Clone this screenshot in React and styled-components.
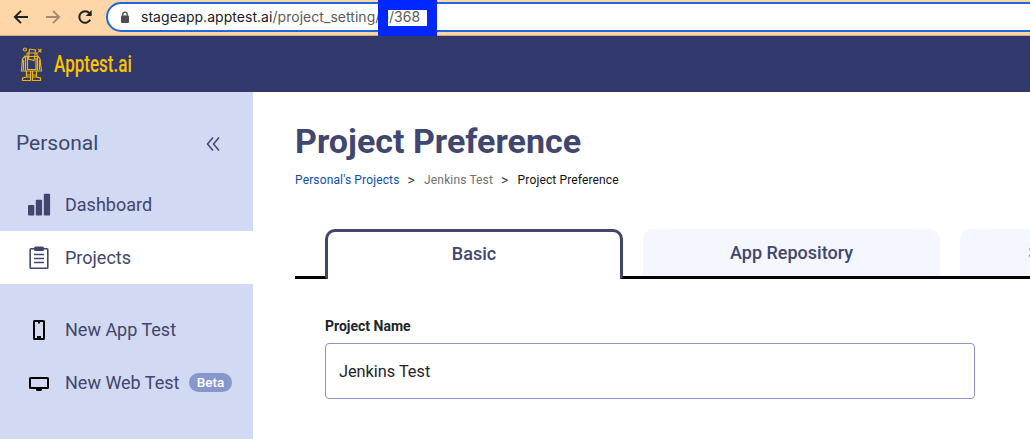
import React from "react";
import styled, { createGlobalStyle } from "styled-components";

const Global = createGlobalStyle`
  * { box-sizing: border-box; }
  body { margin: 0; overflow: hidden; background: #fff; font-family: Roboto, "Liberation Sans", sans-serif; }
`;
const Page = styled.div`
  width: 1030px; height: 439px; overflow: hidden;
  display: flex; flex-direction: column;
`;
const BrowserBar = styled.div`
  position: relative; flex: none; height: 36px; background: #ffd6a8;
  border-bottom: 1px solid #cfae8b; display: flex; align-items: flex-start;
`;
const BrowserIcons = styled.div`
  width: 106px; flex: none; height: 34px; padding-left: 13px;
  display: flex; align-items: center; gap: 16px;
`;
const AddressBar = styled.div`
  flex: none; width: 960px; height: 30px; margin-top: 2px; padding-left: 12px;
  border: 2px solid #1b68e0; border-radius: 15px; background: #fff;
  display: flex; align-items: center; gap: 11px;
`;
const Url = styled.span`
  font: 400 14px/20px Inter, Roboto, sans-serif; color: #202124; white-space: nowrap;
  letter-spacing: 0.04px;
`;
const UrlPath = styled.span`color: #5c5b58;`;
const Marker = styled.div`
  position: absolute; left: 378px; top: 0; width: 59px; height: 36px; border: 10px solid #0027ff;
`;
const NavBar = styled.header`
  flex: none; height: 56px; background: #31386b; padding-left: 20px;
  display: flex; align-items: center; gap: 11px;
`;
const Brand = styled.span`
  margin-top: 2px; font: 500 23px/28px Roboto, sans-serif; color: #fdc300; white-space: nowrap;
  transform: scaleX(0.74); transform-origin: left center;
`;
const Body = styled.div`flex: 1; min-height: 0; display: flex;`;
const Sidebar = styled.aside`
  flex: none; width: 253px; background: #d2d9f3; color: #40466e;
`;
const SideHead = styled.div`
  height: 86px; padding: 15px 33px 0 16px; display: flex; align-items: center;
  justify-content: space-between; font-size: 21px;
`;
const SideItem = styled.div`
  height: 53px; padding-left: 27px; display: flex; align-items: center;
  font-size: 18px; white-space: nowrap;
  background: ${(p) => (p.$active ? "#fff" : "transparent")};
  margin-top: ${(p) => (p.$group ? "19px" : "0")};
`;
const ItemIcon = styled.span`width: 38px; flex: none; display: flex;`;
const Beta = styled.span`
  margin-left: 9.5px; width: 43px; height: 19px; border-radius: 10px; background: #8796cd;
  color: #fff; font: 500 13.5px/19px Roboto, sans-serif; text-align: center;
`;
const Main = styled.main`flex: 1; min-width: 0; padding: 27px 0 0 42px; overflow: hidden;`;
const Title = styled.h1`margin: 0; font: 700 34px/44px Roboto, sans-serif; color: #40466e; white-space: nowrap;`;
const Crumbs = styled.nav`
  height: 18px; margin-top: 8px; display: flex; align-items: center; gap: 8px;
  font-size: 12px; letter-spacing: 0.14px; white-space: nowrap;
`;
const Crumb = styled.span`color: ${(p) => p.$color};`;
const Separator = styled.span`width: 8.6px; font-size: 14px; color: #444;`;
const Tabs = styled.div`
  margin-top: 40px; height: 50px; width: 1000px; display: flex; gap: 20px; padding-left: 30px;
  background: linear-gradient(#000, #000) left bottom / 100% 3px no-repeat;
`;
const Tab = styled.div`
  flex: none; width: ${(p) => (p.$active ? "298px" : "297px")};
  height: ${(p) => (p.$active ? "50px" : "47px")};
  border: ${(p) => (p.$active ? "3px solid #40466e" : "0")}; border-bottom: 0;
  border-radius: 10px 10px ${(p) => (p.$active ? "3px 3px" : "0 0")};
  background: ${(p) => (p.$active ? "#fff" : "#f4f7ff")};
  text-align: center; color: #40466e;
  font: 500 18px/${(p) => (p.$active ? "43px" : "47px")} Roboto, sans-serif;
`;
const ClippedTab = styled(Tab)`text-align: left; padding-left: 68.5px;`;
const Form = styled.section`padding: 38px 0 0 30px;`;
const Label = styled.label`display: block; font: 700 14px/18px Roboto, sans-serif; color: #212529;`;
const Field = styled.div`
  margin-top: 8px; width: 650px; height: 56px; padding-left: 13px; border: 1px solid #8796cd;
  border-radius: 4px; display: flex; align-items: center; font-size: 16.3px; color: #212529;
`;

const ArrowIcon = ({ flip, color }) => (
  <svg width="16" height="16" viewBox="0 0 16 16" fill="none" stroke={color} strokeWidth="1.9">
    <path d={flip ? "M1 8H14M8 1.8L14.2 8L8 14.2" : "M15 8H2M8 1.8L1.8 8L8 14.2"} />
  </svg>
);
const ReloadIcon = () => (
  <svg width="16" height="16" viewBox="0 0 16 16">
    <path d="M13.2 10.8A5.8 5.8 0 1 1 12.5 4.2" fill="none" stroke="#202124" strokeWidth="2" />
    <path d="M14.7 1V7H8.7Z" fill="#202124" />
  </svg>
);
const LockIcon = () => (
  <svg width="10" height="13" viewBox="0 0 10 13">
    <rect x="1" y="4.5" width="8" height="7.5" rx="1" fill="#4b4d51" />
    <path d="M2.8 5V3.3a2.2 2.2 0 0 1 4.4 0V5" fill="none" stroke="#4b4d51" strokeWidth="1.3" />
  </svg>
);
const RobotIcon = () => (
  <svg width="23" height="36" viewBox="0 0 23 36" fill="none" stroke="#e8b512" strokeWidth="1.2">
    <circle cx="5" cy="3.5" r="1.5" />
    <path d="M18.2 3L21.5 6.3M21.5 3L18.2 6.3" />
    <path d="M9.5 3L15.5 4L15 8.5M9.5 3L9 7M7 7H17V11M7 7V11M9 7L8.5 13L14 14.5L15 8.5" />
    <path d="M5.5 9.5L2.5 13L1.5 25H5.5M17.5 9.5L20 13L21.5 25H18" />
    <path d="M5.5 10.5H17.5V25H5.5ZM7.5 11V23.5H16V12M3.5 14V24M19.5 14V24" />
    <path d="M6.5 25V31L2.5 32V34.5H10.5V25M12.5 25V34.5H20.5V32L16.5 31V25M6.5 29H10.5M12.5 29H16.5M6.5 31H10.5M12.5 31H16.5" />
  </svg>
);
const CollapseIcon = () => (
  <svg width="15" height="16" viewBox="0 0 15 16" fill="none" stroke="#40466e" strokeWidth="1.5">
    <path d="M8 2.5L2.5 9L8 15.5M14 2.5L8.5 9L14 15.5" />
  </svg>
);
const BarsIcon = () => (
  <svg width="24" height="24" viewBox="0 0 24 24" fill="#40466e">
    <rect x="1" y="12" width="6.3" height="10.5" rx="1" />
    <rect x="8.8" y="6.8" width="6.3" height="15.7" rx="1" />
    <rect x="16.8" y="0.8" width="6.3" height="21.7" rx="1" />
  </svg>
);
const ClipboardIcon = () => (
  <svg width="24" height="24" viewBox="0 0 24 24">
    <rect x="3.2" y="2.8" width="17.6" height="19.4" rx="0.8" fill="none" stroke="#40466e" strokeWidth="1.6" />
    <rect x="7" y="0.5" width="10" height="4.5" rx="1.5" fill="#40466e" />
    <path d="M7 8.5H17M7 12.5H17M7 16.5H17" stroke="#40466e" strokeWidth="1.7" />
  </svg>
);
const PhoneIcon = () => (
  <svg width="24" height="24" viewBox="0 0 24 24">
    <rect x="7" y="3" width="10" height="18" rx="0.5" fill="none" stroke="#000" strokeWidth="2" />
    <path d="M10 18H14V20H10ZM11 4H13V5.5H11Z" />
  </svg>
);
const ScreenIcon = () => (
  <svg width="24" height="24" viewBox="0 0 24 24">
    <rect x="3" y="7" width="18" height="10" rx="0.5" fill="none" stroke="#000" strokeWidth="2" />
    <path d="M9 18H15V19.5H14V20H10V19.5H9Z" />
  </svg>
);

export default function App() {
  return (
    <Page>
      <Global />
      <BrowserBar>
        <BrowserIcons>
          <ArrowIcon color="#202124" />
          <ArrowIcon flip color="#a38b70" />
          <ReloadIcon />
        </BrowserIcons>
        <AddressBar>
          <LockIcon />
          <Url>stageapp.apptest.ai<UrlPath>/project_setting/p/368</UrlPath></Url>
        </AddressBar>
        <Marker />
      </BrowserBar>
      <NavBar>
        <RobotIcon />
        <Brand>Apptest.ai</Brand>
      </NavBar>
      <Body>
        <Sidebar>
          <SideHead>Personal<CollapseIcon /></SideHead>
          <SideItem><ItemIcon><BarsIcon /></ItemIcon>Dashboard</SideItem>
          <SideItem $active><ItemIcon><ClipboardIcon /></ItemIcon>Projects</SideItem>
          <SideItem $group><ItemIcon><PhoneIcon /></ItemIcon>New App Test</SideItem>
          <SideItem><ItemIcon><ScreenIcon /></ItemIcon>New Web Test<Beta>Beta</Beta></SideItem>
        </Sidebar>
        <Main>
          <Title>Project Preference</Title>
          <Crumbs>
            <Crumb $color="#0a4fae">Personal's Projects</Crumb>
            <Separator>&gt;</Separator>
            <Crumb $color="#6f6f6f">Jenkins Test</Crumb>
            <Separator>&gt;</Separator>
            <Crumb $color="#111">Project Preference</Crumb>
          </Crumbs>
          <Tabs>
            <Tab $active>Basic</Tab>
            <Tab>App Repository</Tab>
            <ClippedTab>S</ClippedTab>
          </Tabs>
          <Form>
            <Label>Project Name</Label>
            <Field>Jenkins Test</Field>
          </Form>
        </Main>
      </Body>
    </Page>
  );
}
